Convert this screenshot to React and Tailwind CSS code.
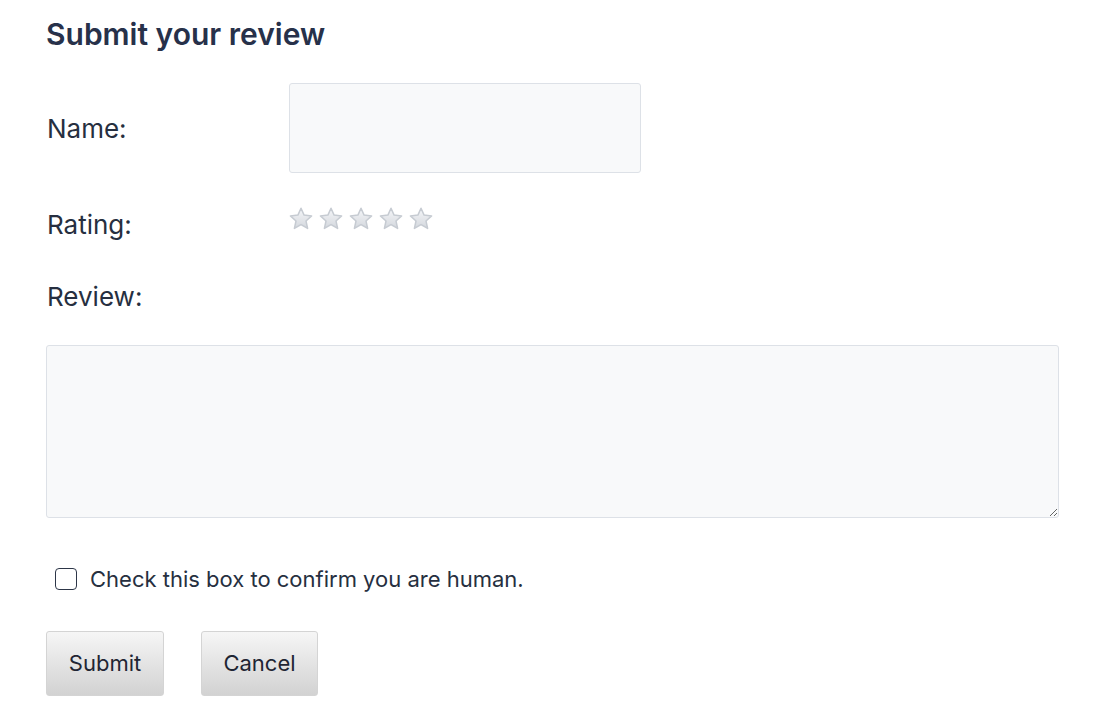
import React from 'react';

// Grey "empty" rating star, drawn like the old jQuery raty sprite
function Star({ id }) {
    return (
        <svg width="26" height="26" viewBox="0 0 26 26" className="shrink-0">
            <defs>
                <linearGradient id={`g${id}`} x1="0" y1="0" x2="0" y2="1">
                    <stop offset="0" stopColor="#f6f7f9" />
                    <stop offset="1" stopColor="#d3d7dd" />
                </linearGradient>
            </defs>
            <path
                d="M13 2.2l3.1 6.9 7.5.8-5.6 5.1 1.6 7.4L13 18.6l-6.6 3.8 1.6-7.4-5.6-5.1 7.5-.8z"
                fill={`url(#g${id})`}
                stroke="#c6cbd2"
                strokeWidth="1.5"
                strokeLinejoin="round"
            />
        </svg>
    );
}

export default function App() {
    const font = { fontFamily: 'Inter, "Liberation Sans", Arial, sans-serif' };

    return (
        <div className="w-[1116px] h-[722px] bg-white text-[#262f40] pl-[46px] pt-[17px]" style={font}>
            {/* ── Heading ── */}
            <h2 className="text-[30px] font-semibold leading-[34px] text-[#27314a]">Submit your review</h2>

            {/* ── Name ── */}
            <div className="flex items-center mt-[32px]">
                <label className="w-[243px] text-[26px] leading-none pl-px pt-[2px]">Name:</label>
                <input className="w-[352px] h-[90px] bg-[#f8f9fa] border border-[#dde1e7] rounded-[3px] outline-none" />
            </div>

            {/* ── Rating ── */}
            <div className="flex items-start mt-[33px]">
                <label className="w-[243px] text-[26px] leading-none pl-px mt-[6px]">Rating:</label>
                <div className="flex gap-[4px] -ml-[1px]">
                    {[0, 1, 2, 3, 4].map((i) => <Star key={i} id={i} />)}
                </div>
            </div>

            {/* ── Review ── */}
            <div className="mt-[46px] text-[26px] leading-none pl-px">Review:</div>
            <textarea className="block mt-[35px] w-[1013px] h-[173px] bg-[#f8f9fa] border border-[#dde1e7] rounded-[3px] outline-none" />

            {/* ── Human check ── */}
            <label className="flex items-center mt-[50px] ml-[9px] gap-[13px] text-[22px] leading-none">
                <span className="w-[22px] h-[22px] border-[1.5px] border-[#2d3648] rounded-[4px] bg-white" />
                Check this box to confirm you are human.
            </label>

            {/* ── Buttons ── */}
            <div className="flex gap-[37px] mt-[41px]">
                <button className="w-[118px] h-[65px] rounded-[3px] border border-[#d4d4d4] bg-gradient-to-b from-[#f6f6f6] to-[#d2d2d2] text-[22px] text-[#1f2533]">Submit</button>
                <button className="w-[117px] h-[65px] rounded-[3px] border border-[#d4d4d4] bg-gradient-to-b from-[#f6f6f6] to-[#d2d2d2] text-[22px] text-[#1f2533]">Cancel</button>
            </div>
        </div>
    );
}
